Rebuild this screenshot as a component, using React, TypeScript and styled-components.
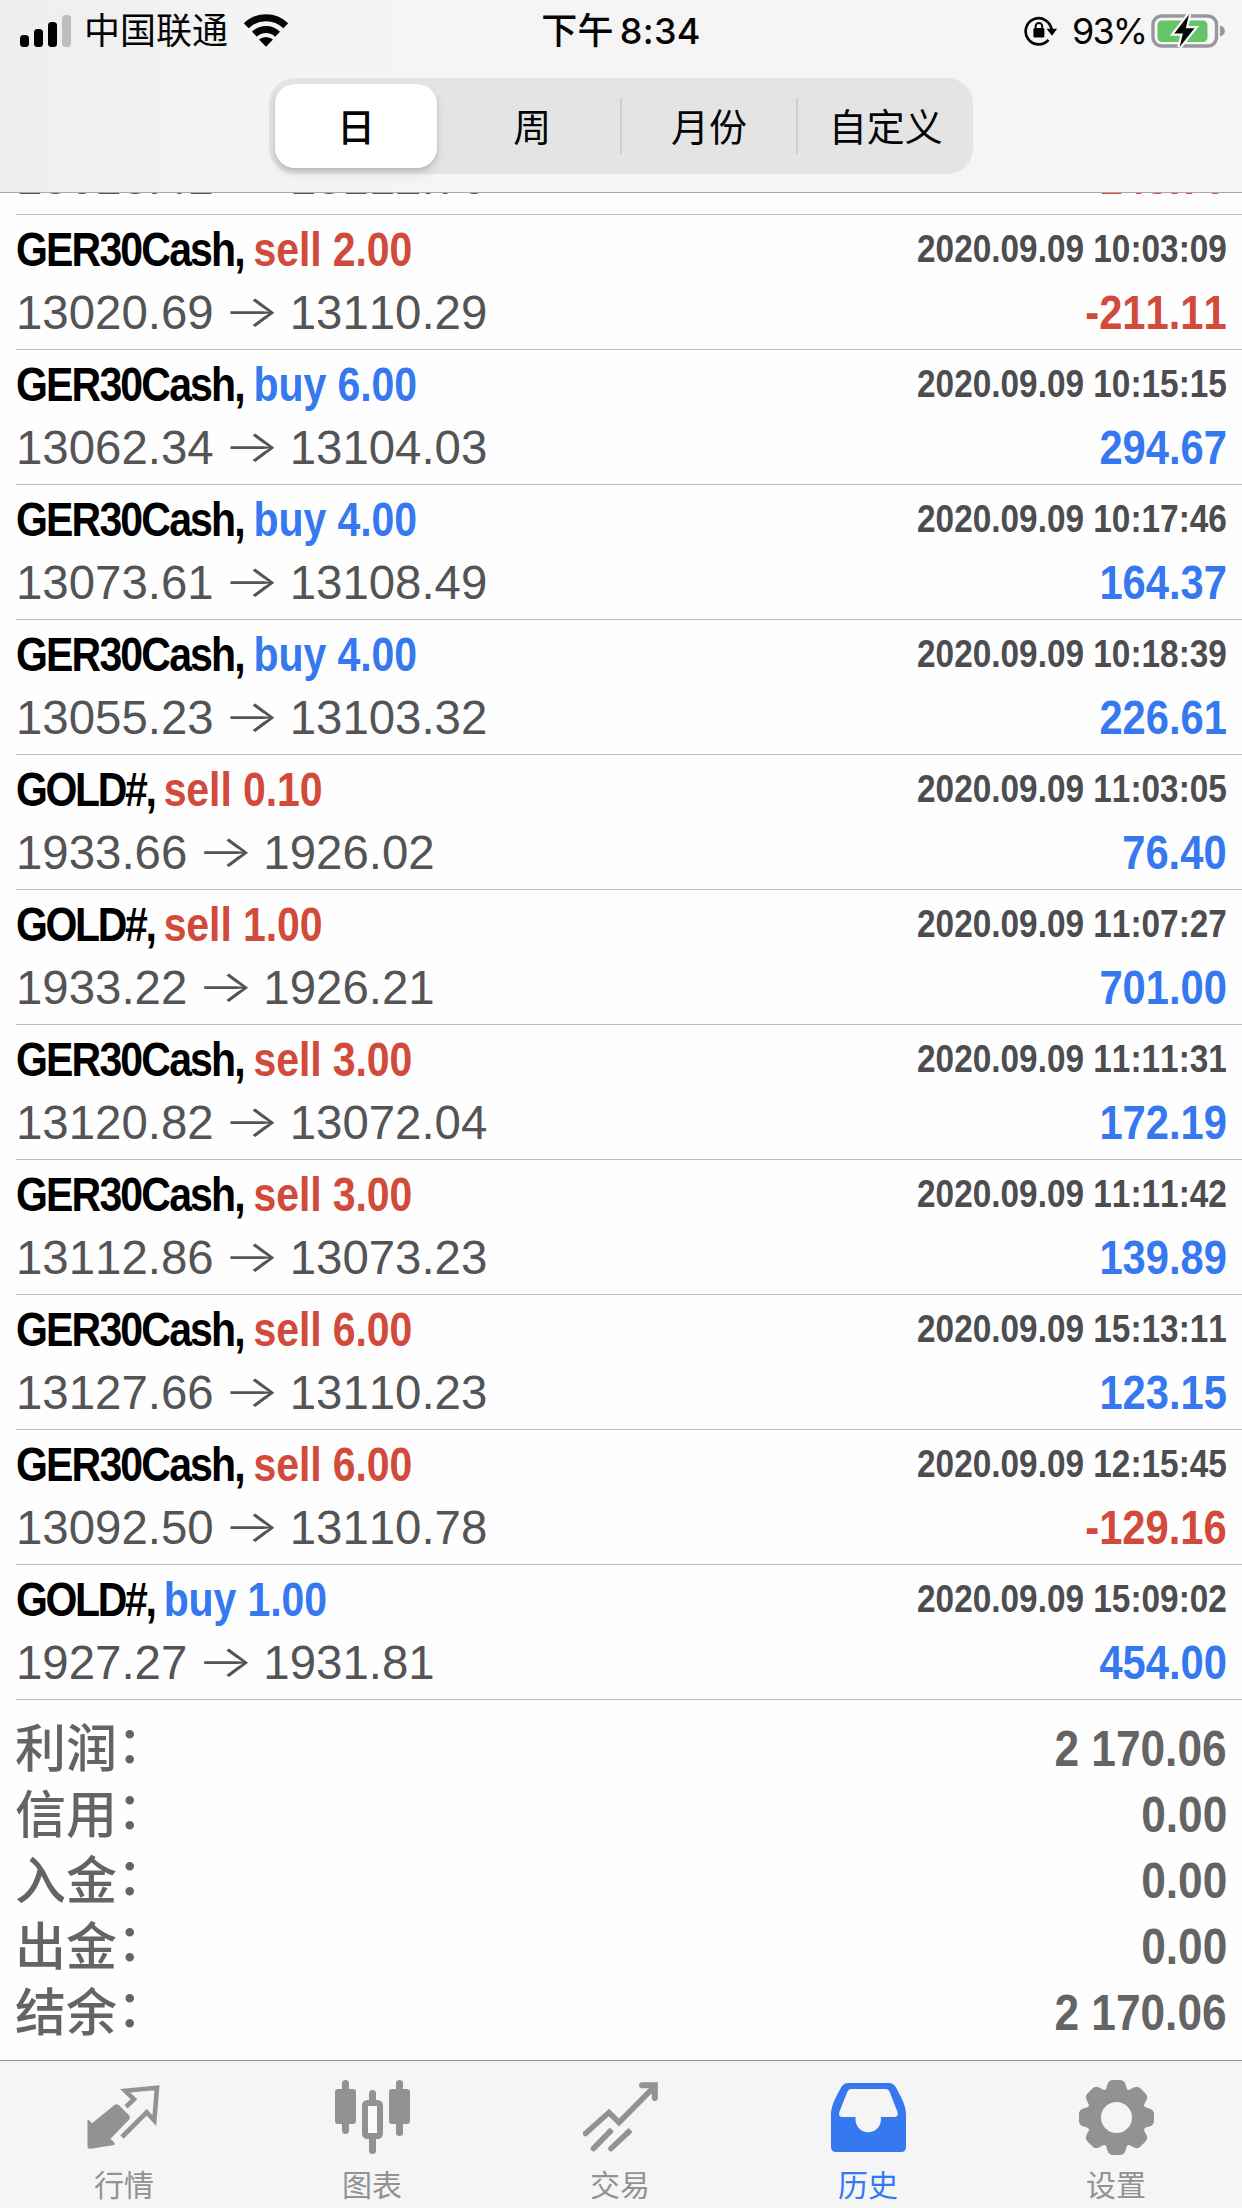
import React from "react";
import styled, { createGlobalStyle } from "styled-components";

const BLUE = "#3578f0";
const RED = "#d14a3a";
const GREY = "#929292";

const Global = createGlobalStyle`
  body { margin: 0; background: #fff; }
  * { box-sizing: border-box; }
`;

const Screen = styled.div`
  width: 1242px;
  height: 2208px;
  display: flex;
  flex-direction: column;
  overflow: hidden;
  background: #fefefe;
  font-family: "Liberation Sans", "Noto Sans CJK SC", sans-serif;
  font-kerning: none;
`;

const Header = styled.header`
  height: 193px;
  flex: none;
  border-bottom: 1px solid #a9a9a9;
  background: linear-gradient(90deg, #eeeeee 0, #f4f4f4 260px, #f5f5f5 100%);
`;

const StatusBar = styled.div`
  height: 62px;
  display: grid;
  grid-template-columns: 1fr auto 1fr;
  align-items: center;
  padding: 0 16px 0 20px;
  font-family: Inter, "Noto Sans CJK SC", sans-serif;
  font-size: 36px;
  line-height: 62px;
  color: #050505;
`;

const StatusGroup = styled.div<{ $end?: boolean }>`
  display: flex;
  align-items: center;
  justify-content: ${(p) => (p.$end ? "flex-end" : "flex-start")};
`;

const Carrier = styled.span`
  margin: 0 15px 0 12px;
`;

const Clock = styled.span`
  margin-right: 4px;
  font-weight: 500;
  letter-spacing: 0.3px;
  word-spacing: -4px;
`;

const Percent = styled.span`
  margin: 0 5px 0 14px;
  letter-spacing: -2px;
`;

const Segments = styled.div`
  width: 704px;
  height: 96px;
  margin: 16px auto 0 269px;
  display: flex;
  align-items: center;
  border-radius: 26px;
  background: #e4e4e5;
`;

const Segment = styled.div<{ $active?: boolean; $divided?: boolean }>`
  flex: ${(p) => (p.$active ? "0 0 162px" : "1")};
  height: ${(p) => (p.$active ? 84 : 56)}px;
  margin: ${(p) => (p.$active ? "0 8px 0 6px" : "0")};
  padding-bottom: 3px;
  display: flex;
  align-items: center;
  justify-content: center;
  border-right: ${(p) => (p.$divided ? "2px solid #cfcfd1" : "0")};
  border-radius: ${(p) => (p.$active ? 20 : 0)}px;
  background: ${(p) => (p.$active ? "#fff" : "transparent")};
  box-shadow: ${(p) => (p.$active ? "0 5px 10px rgba(0,0,0,.14), 0 2px 3px rgba(0,0,0,.08)" : "none")};
  font-family: "Noto Sans CJK SC", sans-serif;
  font-size: 38px;
  font-weight: ${(p) => (p.$active ? 500 : 400)};
  line-height: 56px;
  color: #050505;
`;

const List = styled.main`
  flex: 1;
  padding-left: 16px;
`;

const ScrolledOff = styled.div`
  height: 22px;
  display: flex;
  flex-direction: column;
  justify-content: flex-end;
  overflow: hidden;
`;

const DealRow = styled.article`
  height: 135px;
  flex: none;
  padding: 5px 15px 0 0;
  border-bottom: 1px solid #c0c0c2;
`;

const Line = styled.div`
  display: flex;
  justify-content: space-between;
  white-space: nowrap;
`;

const Title = styled.div<{ $caps: boolean }>`
  font-size: 47.4px;
  line-height: 60px;
  font-weight: 700;
  letter-spacing: ${(p) => (p.$caps ? -2.7 : -2.1)}px;
  color: #000;
  transform: scaleX(0.865);
  transform-origin: left;
`;

const Side = styled.span<{ $sell: boolean }>`
  letter-spacing: -0.1px;
  color: ${(p) => (p.$sell ? RED : BLUE)};
`;

const Stamp = styled.time`
  font-size: 38px;
  line-height: 58px;
  font-weight: 700;
  color: #4d4d50;
  transform: scaleX(0.878);
  transform-origin: right;
`;

const Prices = styled.div`
  display: flex;
  font-size: 47.4px;
  line-height: 65px;
  color: #545456;
`;

const Arrow = styled.span`
  width: 76px;
  margin-top: -2px;
  display: flex;
  justify-content: center;
  font-family: Inter, sans-serif;
  font-size: 60px;
  font-weight: 300;
  transform: scaleY(0.74);
`;

const Amount = styled.div<{ $loss: boolean }>`
  font-size: 47.4px;
  line-height: 65px;
  font-weight: 700;
  color: ${(p) => (p.$loss ? RED : BLUE)};
  transform: scaleX(0.88);
  transform-origin: right;
`;

const Summary = styled.section`
  padding: 16px 15px 0 0;
`;

const Total = styled.div`
  height: 66px;
  display: flex;
  justify-content: space-between;
  font-weight: 700;
  line-height: 66px;
  color: #646464;
`;

const TotalLabel = styled.span`
  margin: -4px 0 0 -1px;
  font-family: "Noto Sans CJK SC", sans-serif;
  font-size: 51px;
  font-weight: 500;
`;

const Colon = styled.span`
  line-height: 1;
  vertical-align: 4px;
`;

const TotalValue = styled.span`
  font-size: 50px;
  transform: scaleX(0.885);
  transform-origin: right;
`;

const TabBar = styled.nav`
  height: 148px;
  flex: none;
  display: grid;
  grid-template-columns: repeat(5, 248px);
  border-top: 1px solid #8e8e90;
  background: #f5f5f5;
`;

const Tab = styled.div<{ $active?: boolean }>`
  display: flex;
  flex-direction: column;
  align-items: center;
  padding-top: 19px;
  color: ${(p) => (p.$active ? BLUE : GREY)};
`;

const TabLabel = styled.span`
  margin-top: 8px;
  font-family: "Noto Sans CJK SC", sans-serif;
  font-size: 30px;
  line-height: 40px;
`;

const SignalIcon = () => (
  <svg width="52" height="32" viewBox="0 0 52 32">
    <rect x="0" y="20" width="9" height="12" rx="3.5" />
    <rect x="14" y="14" width="9" height="18" rx="3.5" />
    <rect x="28" y="7" width="9" height="25" rx="3.5" />
    <rect x="42" y="0" width="9" height="32" rx="3.5" fill="#bdbdbd" />
  </svg>
);

const WifiIcon = () => (
  <svg width="46" height="35" viewBox="0 0 46 35">
    <path d="M3.2 11.8A28.5 28.5 0 0 1 42.8 11.8" fill="none" stroke="#050505" strokeWidth="7" />
    <path d="M11.4 20.2A16.7 16.7 0 0 1 34.6 20.2" fill="none" stroke="#050505" strokeWidth="7" />
    <path d="M16 25.6A10.5 10.5 0 0 1 30 25.6L23 32.8Z" />
  </svg>
);

const LockIcon = () => (
  <svg width="34" height="32" viewBox="0 0 34 32">
    <path d="M27.6 15A13 13 0 1 0 24.5 24.8" fill="none" stroke="#050505" strokeWidth="2.7" />
    <path d="M22.5 13.8h10.6l-5.1 7z" />
    <rect x="9.4" y="13" width="11" height="9.4" rx="1.5" />
    <path d="M11.6 14v-2.8a3.3 3.3 0 0 1 6.6 0V14" fill="none" stroke="#050505" strokeWidth="2" />
  </svg>
);

const BatteryIcon = () => (
  <svg width="75" height="40" viewBox="0 0 75 40">
    <rect x="2" y="5" width="63.5" height="30" rx="8.5" fill="#f8f8f8" stroke="#98979d" strokeWidth="3.4" />
    <rect x="6.5" y="9.5" width="50" height="21.5" rx="4.5" fill="#63c567" />
    <path d="M69 14.5q4.8 1.4 4.8 5.5T69 25.5z" fill="#98979d" />
    <path
      d="M38 3.5 23.3 22.4h8.6L28.6 36 43.5 17.2h-8.7z"
      fill="#050505"
      stroke="#f8f8f8"
      strokeWidth="4.5"
      paintOrder="stroke"
    />
  </svg>
);

const QuotesIcon = () => (
  <svg width="75" height="75" viewBox="0 0 75 75" fill="currentColor">
    <path d="M0.5 41.5Q0.5 39 3 41L5 43.2 27.8 24.8Q30 23.5 32 25.3L41.8 35Q43.8 37.4 42 39.8L23.5 58.8 27.4 62.8Q28.3 65 26 65.2L3.6 68.7Q0.5 69 .5 66Z" />
    <path
      d="M39 26.7 47 19.3 38.2 10.8 70 7.7 67.3 40.6 59.7 32.3 35 57"
      fill="none"
      stroke="currentColor"
      strokeWidth="4.6"
    />
  </svg>
);

const ChartsIcon = () => (
  <svg width="75" height="75" viewBox="0 0 75 75" fill="currentColor">
    <rect x="7" y="0" width="7" height="54" rx="3.5" />
    <rect x="0" y="9" width="21" height="35" rx="3" />
    <rect x="61" y="0" width="7" height="56" rx="3.5" />
    <rect x="54" y="9" width="21" height="35" rx="3" />
    <path d="M34 22v-8.5a3.5 3.5 0 0 1 7 0V22zM34 57v13.5a3.5 3.5 0 0 0 7 0V57z" />
    <rect x="30" y="23" width="15" height="33" rx="2.5" fill="#fafafa" stroke="currentColor" strokeWidth="6" />
  </svg>
);

const TradeIcon = () => (
  <svg width="75" height="75" viewBox="0 0 75 75" fill="none" stroke="currentColor" strokeWidth="5.6">
    <path d="M2.5 53.5 26 32.5 36 42.5 70 8" strokeLinecap="round" />
    <path d="M59 5.3H71.8V18" strokeWidth="6" strokeLinecap="round" />
    <path d="M10.5 68.5 27 51.5M28 68.5 45.5 52" strokeLinecap="round" />
    <path d="M25 53.5 28.8 49.6M43.5 53.9 47.6 50" />
  </svg>
);

const HistoryIcon = () => (
  <svg width="75" height="75" viewBox="0 0 75 75" fill="currentColor">
    <path
      fillRule="evenodd"
      d="M17 3H58Q62.5 3 65 7.5C70 17 75 25 75 35V67Q75 72 70 72H5Q0 72 0 67V35C0 25 5 17 10 7.5Q12.5 3 17 3ZM20 9Q17.5 9 16.5 11.5L8.3 32Q7 37 11.5 37H24.5V39.5A12.7 12.7 0 0 0 49.9 39.5V37H63Q68 37 66.5 32L58.5 11.5Q57.5 9 55 9Z"
    />
  </svg>
);

const TEETH = [0, 45, 90, 135, 180, 225, 270, 315];

const GearIcon = () => (
  <svg width="75" height="75" viewBox="-37.5 -37.5 75 75" fill="currentColor">
    <circle r="22.8" fill="none" stroke="currentColor" strokeWidth="14.6" />
    {TEETH.map((a) => (
      <path
        key={a}
        transform={`rotate(${a})`}
        d="M-13-25C-10-27-10-31-8.8-33.5Q-7.5-37.5-3.5-37.5H3.5Q7.5-37.5 8.8-33.5C10-31 10-27 13-25Z"
      />
    ))}
  </svg>
);

type Deal = { symbol: string; side: "buy" | "sell"; lots: string; open: string; close: string; time: string; profit: string };

const deal = (symbol: string, side: "buy" | "sell", lots: string, open: string, close: string, time: string, profit: string): Deal => ({
  symbol, side, lots, open, close, time, profit,
});

const previous = { open: "13018.41", close: "13112.70", profit: "-148.70" };

const deals: Deal[] = [
  deal("GER30Cash", "sell", "2.00", "13020.69", "13110.29", "10:03:09", "-211.11"),
  deal("GER30Cash", "buy", "6.00", "13062.34", "13104.03", "10:15:15", "294.67"),
  deal("GER30Cash", "buy", "4.00", "13073.61", "13108.49", "10:17:46", "164.37"),
  deal("GER30Cash", "buy", "4.00", "13055.23", "13103.32", "10:18:39", "226.61"),
  deal("GOLD#", "sell", "0.10", "1933.66", "1926.02", "11:03:05", "76.40"),
  deal("GOLD#", "sell", "1.00", "1933.22", "1926.21", "11:07:27", "701.00"),
  deal("GER30Cash", "sell", "3.00", "13120.82", "13072.04", "11:11:31", "172.19"),
  deal("GER30Cash", "sell", "3.00", "13112.86", "13073.23", "11:11:42", "139.89"),
  deal("GER30Cash", "sell", "6.00", "13127.66", "13110.23", "15:13:11", "123.15"),
  deal("GER30Cash", "sell", "6.00", "13092.50", "13110.78", "12:15:45", "-129.16"),
  deal("GOLD#", "buy", "1.00", "1927.27", "1931.81", "15:09:02", "454.00"),
];

const totals = [
  ["利润", "2 170.06"],
  ["信用", "0.00"],
  ["入金", "0.00"],
  ["出金", "0.00"],
  ["结余", "2 170.06"],
];

const PriceLine = ({ d }: { d: Pick<Deal, "open" | "close" | "profit"> }) => (
  <Line>
    <Prices>
      <span>{d.open}</span>
      <Arrow>→</Arrow>
      <span>{d.close}</span>
    </Prices>
    <Amount $loss={d.profit.startsWith("-")}>{d.profit}</Amount>
  </Line>
);

const DealItem = ({ d }: { d: Deal }) => (
  <DealRow>
    <Line>
      <Title $caps={d.symbol === "GOLD#"}>
        {d.symbol}, <Side $sell={d.side === "sell"}>{d.side} {d.lots}</Side>
      </Title>
      <Stamp>2020.09.09 {d.time}</Stamp>
    </Line>
    <PriceLine d={d} />
  </DealRow>
);

const PartialRow = styled(DealRow)`
  height: 70px;
  padding-top: 0;
`;

const tabs = [
  { label: "行情", Icon: QuotesIcon },
  { label: "图表", Icon: ChartsIcon },
  { label: "交易", Icon: TradeIcon },
  { label: "历史", Icon: HistoryIcon, active: true },
  { label: "设置", Icon: GearIcon },
];

export default function App() {
  return (
    <Screen>
      <Global />
      <Header>
        <StatusBar>
          <StatusGroup>
            <SignalIcon />
            <Carrier>中国联通</Carrier>
            <WifiIcon />
          </StatusGroup>
          <Clock>下午 8:34</Clock>
          <StatusGroup $end>
            <LockIcon />
            <Percent>93%</Percent>
            <BatteryIcon />
          </StatusGroup>
        </StatusBar>
        <Segments>
          <Segment $active>日</Segment>
          <Segment $divided>周</Segment>
          <Segment $divided>月份</Segment>
          <Segment>自定义</Segment>
        </Segments>
      </Header>
      <List>
        <ScrolledOff>
          <PartialRow>
            <PriceLine d={previous} />
          </PartialRow>
        </ScrolledOff>
        {deals.map((d) => (
          <DealItem key={d.time} d={d} />
        ))}
        <Summary>
          {totals.map(([label, value]) => (
            <Total key={label}>
              <TotalLabel>
                {label}
                <Colon>：</Colon>
              </TotalLabel>
              <TotalValue>{value}</TotalValue>
            </Total>
          ))}
        </Summary>
      </List>
      <TabBar>
        {tabs.map(({ label, Icon, active }) => (
          <Tab key={label} $active={active}>
            <Icon />
            <TabLabel>{label}</TabLabel>
          </Tab>
        ))}
      </TabBar>
    </Screen>
  );
}
